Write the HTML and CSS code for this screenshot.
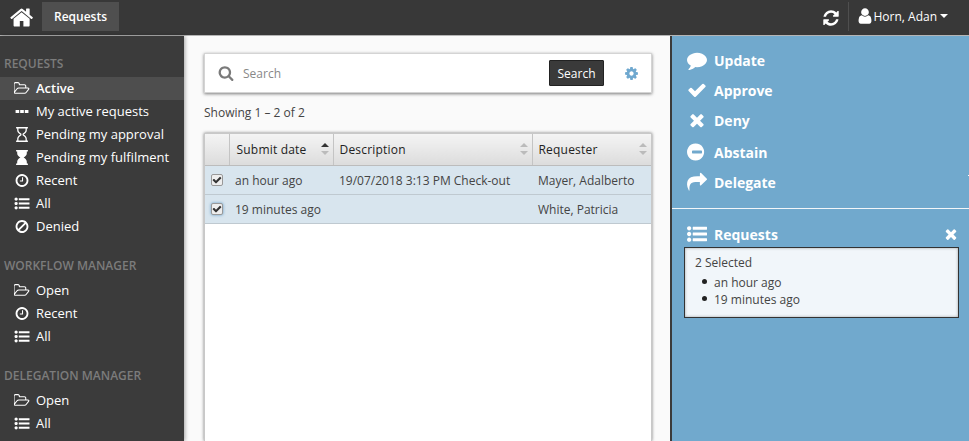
FILE: index.html
```html
<!DOCTYPE html>
<html lang="en">
<head>
<meta charset="utf-8">
<title>Requests</title>
<link rel="stylesheet" href="styles.css">
</head>
<body>
<svg class="defs" width="0" height="0" aria-hidden="true">
  <symbol id="i-home" viewBox="0 0 1792 1792"><path d="M1408 992v480q0 26-19 45t-45 19h-384v-384h-256v384h-384q-26 0-45-19t-19-45v-480q0-1 .5-3t.5-3l575-474 575 474q1 2 1 6zm223-69l-62 74q-8 9-21 11h-3q-13 0-21-7l-692-577-692 577q-12 8-24 7-13-2-21-11l-62-74q-8-10-7-23.5t11-20.5l719-599q32-26 76-26t76 26l244 204v-195q0-14 9-23t23-9h192q14 0 23 9t9 23v408l219 182q10 8 11 21.5t-7 23.5z"/></symbol>
  <symbol id="i-refresh" viewBox="0 0 1792 1792"><path d="M1639 1056q0 5-1 7-64 268-268 434.5t-478 166.5q-146 0-282.5-55t-243.5-157l-129 129q-19 19-45 19t-45-19-19-45v-448q0-26 19-45t45-19h448q26 0 45 19t19 45-19 45l-137 137q71 66 161 102t187 36q134 0 250-65t186-179q11-17 53-117 8-23 30-23h192q13 0 22.5 9.5t9.5 22.5zm25-800v448q0 26-19 45t-45 19h-448q-26 0-45-19t-19-45 19-45l138-138q-148-137-349-137-134 0-250 65t-186 179q-11 17-53 117-8 23-30 23h-199q-13 0-22.5-9.5t-9.5-22.5v-7q65-268 270-434.5t480-166.5q146 0 284 55.5t245 156.5l130-129q19-19 45-19t45 19 19 45z"/></symbol>
  <symbol id="i-user" viewBox="0 0 1792 1792"><path d="M1536 1399q0 109-62.5 187t-150.5 78h-854q-88 0-150.5-78t-62.5-187q0-85 8.5-160.5t31.5-152 58.5-131 94-89 134.5-34.5q131 128 313 128t313-128q76 0 134.5 34.5t94 89 58.5 131 31.5 152 8.5 160.5zm-256-887q0 159-112.5 271.5t-271.5 112.5-271.5-112.5-112.5-271.5 112.5-271.5 271.5-112.5 271.5 112.5 112.5 271.5z"/></symbol>
  <symbol id="i-folder" viewBox="0 0 1920 1792"><path d="M1717 931q0-35-53-35h-1088q-40 0-85.5 21.5t-71.5 52.5l-294 363q-18 24-18 40 0 35 53 35h1088q40 0 86-22t71-53l294-363q18-22 18-39zm-1141-163h768v-160q0-40-28-68t-68-28h-576q-40 0-68-28t-28-68v-64q0-40-28-68t-68-28h-320q-40 0-68 28t-28 68v853l256-315q44-53 116-87.5t140-34.5zm1269 163q0 62-46 120l-295 363q-43 53-116 87.5t-140 34.5h-1088q-92 0-158-66t-66-158v-960q0-92 66-158t158-66h320q92 0 158 66t66 158v32h544q92 0 158 66t66 158v160h192q54 0 99 24.5t67 70.5q15 32 15 68z"/></symbol>
  <symbol id="i-dots" viewBox="0 0 14 14"><path d="M1 5.500h3.400v3h-3.400zM5.300 5.500h3.400v3h-3.400zM9.600 5.500h3.400v3h-3.400z"/></symbol>
  <symbol id="i-glass" viewBox="0 0 14 14"><path d="M1.500 0h11v1.300h-1v1.700c0 1.900-1.500 3.200-3 4 1.500.8 3 2.100 3 4v1.700h1v1.300h-11v-1.300h1v-1.700c0-1.900 1.500-3.200 3-4-1.500-.8-3-2.100-3-4v-1.700h-1zM3.700 1.300v1.700c0 1.500 1.500 2.500 2.800 3.300v1.400c-1.300.8-2.800 1.800-2.800 3.300v1.700h6.600v-1.700c0-1.500-1.500-2.500-2.800-3.300v-1.400c1.300-.8 2.800-1.800 2.800-3.300v-1.700z"/></symbol>
  <symbol id="i-glass-half" viewBox="0 0 14 14"><path d="M1.500 0h11v1.300h-1v1.700c0 1.900-1.500 3.200-3 4 1.500.8 3 2.100 3 4v1.700h1v1.300h-11v-1.300h1v-1.700c0-1.900 1.500-3.200 3-4-1.500-.8-3-2.100-3-4v-1.700h-1z"/></symbol>
  <symbol id="i-clock" viewBox="0 0 1792 1792"><path d="M1024 544v448q0 14-9 23t-23 9h-320q-14 0-23-9t-9-23v-64q0-14 9-23t23-9h224v-352q0-14 9-23t23-9h64q14 0 23 9t9 23zm416 352q0-148-73-273t-198-198-273-73-273 73-198 198-73 273 73 273 198 198 273 73 273-73 198-198 73-273zm224 0q0 209-103 385.500t-279.500 279.500-385.500 103-385.500-103-279.500-279.500-103-385.500 103-385.500 279.500-279.500 385.500-103 385.500 103 279.500 279.500 103 385.500z"/></symbol>
  <symbol id="i-list" viewBox="0 0 1792 1792"><path d="M384 1408q0 80-56 136t-136 56-136-56-56-136 56-136 136-56 136 56 56 136zm0-512q0 80-56 136t-136 56-136-56-56-136 56-136 136-56 136 56 56 136zm1408 416v192q0 13-9.500 22.500t-22.500 9.500h-1216q-13 0-22.500-9.500t-9.500-22.500v-192q0-13 9.500-22.500t22.500-9.500h1216q13 0 22.500 9.500t9.500 22.500zm-1408-928q0 80-56 136t-136 56-136-56-56-136 56-136 136-56 136 56 56 136zm1408 416v192q0 13-9.500 22.500t-22.500 9.500h-1216q-13 0-22.500-9.500t-9.500-22.500v-192q0-13 9.500-22.500t22.500-9.500h1216q13 0 22.500 9.500t9.500 22.500zm0-512v192q0 13-9.500 22.500t-22.500 9.500h-1216q-13 0-22.500-9.500t-9.500-22.500v-192q0-13 9.500-22.500t22.500-9.500h1216q13 0 22.500 9.500t9.500 22.500z"/></symbol>
  <symbol id="i-ban" viewBox="0 0 1792 1792"><path d="M1440 893q0-161-87-295l-754 753q137 89 297 89 111 0 211.500-43.500t173.500-116.500 116-174.500 43-212.500zm-999 299l755-754q-135-91-300-91-148 0-273 73t-198 199-73 274q0 162 89 299zm1223-299q0 157-61 300t-163.500 246-245 164-298.500 61-298.500-61-245-164-163.500-246-61-300 61-299.500 163.500-245.500 245-164 298.500-61 298.500 61 245 164 163.500 245.500 61 299.500z"/></symbol>
  <symbol id="i-search" viewBox="0 0 1792 1792"><path d="M1216 832q0-185-131.500-316.500t-316.500-131.500-316.500 131.500-131.500 316.500 131.500 316.500 316.500 131.500 316.500-131.500 131.500-316.500zm512 832q0 52-38 90t-90 38q-54 0-90-38l-343-342q-179 124-399 124-143 0-273.500-55.500t-225-150-150-225-55.500-273.500 55.500-273.500 150-225 225-150 273.500-55.500 273.500 55.500 225 150 150 225 55.500 273.500q0 220-124 399l343 343q37 37 37 90z"/></symbol>
  <symbol id="i-cog" viewBox="0 0 1792 1792"><path d="M1152 896q0-106-75-181t-181-75-181 75-75 181 75 181 181 75 181-75 75-181zm512-109v222q0 12-8 23t-20 13l-185 28q-19 54-39 91 35 50 107 138 10 12 10 25t-9 23q-27 37-99 108t-94 71q-12 0-26-9l-138-108q-44 23-91 38-16 136-29 186-7 28-36 28h-222q-14 0-24.500-8.500t-11.500-21.500l-28-184q-49-16-90-37l-141 107q-10 9-25 9-14 0-25-11-126-114-165-168-7-10-7-23 0-12 8-23 15-21 51-66.500t54-70.500q-27-50-41-99l-183-27q-13-2-21-12.500t-8-23.500v-222q0-12 8-23t19-13l186-28q14-46 39-92-40-57-107-138-10-12-10-24 0-10 9-23 26-36 98.500-107.500t94.500-71.500q13 0 26 10l138 107q44-23 91-38 16-136 29-186 7-28 36-28h222q14 0 24.500 8.500t11.500 21.500l28 184q49 16 90 37l142-107q9-9 24-9 13 0 25 10 129 119 165 170 7 8 7 22 0 12-8 23-15 21-51 66.500t-54 70.500q26 50 41 98l183 28q13 2 21 12.500t8 23.500z"/></symbol>
  <symbol id="i-comment" viewBox="0 0 1792 1792"><path d="M1792 896q0 174-120 321.500t-326 233-450 85.500q-70 0-145-8-198 175-460 242-49 14-114 22-17 2-30.500-9t-17.500-29v-1q-3-4-.5-12t2-10 4.500-9.500l6-9 7-8.500 8-9q7-8 31-34.500t34.500-38 31-39.500 32.500-51 27-59 26-76q-157-89-247.500-220t-90.500-281q0-130 71-248.500t191-204.500 286-136.500 348-50.500q244 0 450 85.500t326 233 120 321.500z"/></symbol>
  <symbol id="i-check" viewBox="0 0 1792 1792"><path d="M1671 566q0 40-28 68l-724 724-136 136q-28 28-68 28t-68-28l-136-136-362-362q-28-28-28-68t28-68l136-136q28-28 68-28t68 28l294 295 656-657q28-28 68-28t68 28l136 136q28 28 28 68z"/></symbol>
  <symbol id="i-times" viewBox="0 0 1792 1792"><path d="M1490 1322q0 40-28 68l-136 136q-28 28-68 28t-68-28l-294-294-294 294q-28 28-68 28t-68-28l-136-136q-28-28-28-68t28-68l294-294-294-294q-28-28-28-68t28-68l136-136q28-28 68-28t68 28l294 294 294-294q28-28 68-28t68 28l136 136q28 28 28 68t-28 68l-294 294 294 294q28 28 28 68z"/></symbol>
  <symbol id="i-minus" viewBox="0 0 1792 1792"><path d="M1344 960v-128q0-26-19-45t-45-19h-768q-26 0-45 19t-19 45v128q0 26 19 45t45 19h768q26 0 45-19t19-45zm192-64q0 209-103 385.500t-279.500 279.500-385.500 103-385.500-103-279.500-279.500-103-385.500 103-385.500 279.500-279.500 385.500-103 385.500 103 279.500 279.500 103 385.500z"/></symbol>
  <symbol id="i-share" viewBox="0 0 1792 1792"><path d="M1792 640q0 26-19 45l-512 512q-19 19-45 19t-45-19-19-45v-256h-224q-98 0-175.500 6t-154 21.500-133 42.500-105.500 69.500-77.500 103-47.500 136.500-16.500 178q0 57 5 127 0 6 2.500 23.500t2.500 26.500q0 15-8.500 25t-23.500 10q-16 0-28-17-7-9-13-22t-13.500-30-10.500-24q-127-285-127-451 0-199 53-333 162-403 875-403h224v-256q0-26 19-45t45-19 45 19l512 512q19 19 19 45z"/></symbol>
</svg>

<header class="topbar">
  <svg class="home-icon"><use href="#i-home"/></svg>
  <a class="top-tab">Requests</a>
  <div class="top-right">
    <svg class="refresh-icon"><use href="#i-refresh"/></svg>
    <div class="top-user">
      <svg class="user-icon"><use href="#i-user"/></svg>
      <span>Horn, Adan</span>
      <span class="caret"></span>
    </div>
  </div>
</header>

<div class="shell">
  <nav class="sidebar">
    <h2 class="nav-title nav-title-first">REQUESTS</h2>
    <ul class="nav-list">
      <li class="nav-item nav-active"><svg class="nav-icon"><use href="#i-folder"/></svg>Active</li>
      <li class="nav-item"><svg class="nav-icon"><use href="#i-dots"/></svg>My active requests</li>
      <li class="nav-item"><svg class="nav-icon"><use href="#i-glass"/></svg>Pending my approval</li>
      <li class="nav-item"><svg class="nav-icon"><use href="#i-glass-half"/></svg>Pending my fulfilment</li>
      <li class="nav-item"><svg class="nav-icon"><use href="#i-clock"/></svg>Recent</li>
      <li class="nav-item"><svg class="nav-icon"><use href="#i-list"/></svg>All</li>
      <li class="nav-item"><svg class="nav-icon"><use href="#i-ban"/></svg>Denied</li>
    </ul>
    <h2 class="nav-title">WORKFLOW MANAGER</h2>
    <ul class="nav-list">
      <li class="nav-item"><svg class="nav-icon"><use href="#i-folder"/></svg>Open</li>
      <li class="nav-item"><svg class="nav-icon"><use href="#i-clock"/></svg>Recent</li>
      <li class="nav-item"><svg class="nav-icon"><use href="#i-list"/></svg>All</li>
    </ul>
    <h2 class="nav-title">DELEGATION MANAGER</h2>
    <ul class="nav-list">
      <li class="nav-item"><svg class="nav-icon"><use href="#i-folder"/></svg>Open</li>
      <li class="nav-item"><svg class="nav-icon"><use href="#i-list"/></svg>All</li>
    </ul>
  </nav>

  <main class="content">
    <div class="search-card">
      <svg class="search-icon"><use href="#i-search"/></svg>
      <span class="search-placeholder">Search</span>
      <button class="search-btn">Search</button>
      <svg class="cog-icon"><use href="#i-cog"/></svg>
    </div>
    <p class="showing">Showing 1 – 2 of 2</p>
    <div class="table-card">
      <table class="grid">
        <thead>
          <tr>
            <th class="col-check"></th>
            <th class="col-date"><span class="th-in">Submit date<span class="sort sort-asc"></span></span></th>
            <th class="col-desc"><span class="th-in">Description<span class="sort"></span></span></th>
            <th class="col-req"><span class="th-in">Requester<span class="sort"></span></span></th>
          </tr>
        </thead>
        <tbody>
          <tr>
            <td class="cell-check"><span class="checkbox"><svg class="check-mark"><use href="#i-check"/></svg></span></td>
            <td>an hour ago</td>
            <td>19/07/2018 3:13 PM Check-out</td>
            <td>Mayer, Adalberto</td>
          </tr>
          <tr>
            <td class="cell-check"><span class="checkbox checkbox-focus"><svg class="check-mark"><use href="#i-check"/></svg></span></td>
            <td>19 minutes ago</td>
            <td></td>
            <td>White, Patricia</td>
          </tr>
        </tbody>
      </table>
    </div>
  </main>

  <aside class="actions">
    <ul class="action-list">
      <li class="action"><svg class="action-icon"><use href="#i-comment"/></svg>Update</li>
      <li class="action"><svg class="action-icon"><use href="#i-check"/></svg>Approve</li>
      <li class="action"><svg class="action-icon"><use href="#i-times"/></svg>Deny</li>
      <li class="action action-gap"><svg class="action-icon"><use href="#i-minus"/></svg>Abstain</li>
      <li class="action"><svg class="action-icon"><use href="#i-share"/></svg>Delegate</li>
    </ul>
    <hr class="divider">
    <div class="sel-head">
      <svg class="action-icon"><use href="#i-list"/></svg>
      <span>Requests</span>
      <svg class="close-icon"><use href="#i-times"/></svg>
    </div>
    <div class="sel-box">
      <div>2 Selected</div>
      <ul class="sel-list">
        <li class="sel-item">an hour ago</li>
        <li class="sel-item">19 minutes ago</li>
      </ul>
    </div>
  </aside>
</div>
</body>
</html>
```

FILE: styles.css
```css
* { box-sizing: border-box; }
html, body { margin: 0; height: 100%; overflow: hidden; }
body {
  display: flex;
  flex-direction: column;
  font-family: "Open Sans", sans-serif;
  font-size: 12px;
  color: #333;
  background: #fafafa;
}
.defs { position: absolute; }
svg { fill: currentColor; display: block; flex: none; }

/* top bar */
.topbar {
  flex: none;
  height: 36px;
  display: flex;
  align-items: center;
  background: #383838;
  border-bottom: 1px solid #b5b5b5;
  color: #fff;
}
.home-icon { width: 25px; height: 25px; margin-left: 10px; }
.top-tab {
  margin-left: 7px;
  height: 29px;
  width: 77px;
  margin-top: -3px;
  display: flex;
  align-items: center;
  justify-content: center;
  background: #4f4f4f;
  font-weight: 600;
}
.top-right { margin-left: auto; display: flex; align-items: center; height: 100%; }
.refresh-icon { width: 18px; height: 18px; margin-right: 8px; }
.top-user {
  height: 29px;
  margin-top: -3px;
  padding-left: 7px;
  padding-right: 21px;
  border-left: 1px solid #4f4f4f;
  display: flex;
  align-items: center;
}
.user-icon { width: 18px; height: 18px; margin-right: -1px; }
.caret {
  margin-left: 3px;
  border: 4px solid transparent;
  border-top-color: #fff;
  border-bottom: 0;
}

.shell { flex: 1; display: flex; min-height: 0; }

/* sidebar */
.sidebar {
  flex: none;
  width: 184px;
  background: #3b3b3b;
  color: #fff;
  box-shadow: 1px 0 4px rgba(0,0,0,.35);
  z-index: 1;
}
.nav-title {
  margin: 18px 0 3px;
  padding-left: 4px;
  font-size: 12px;
  line-height: 20px;
  font-weight: 600;
  color: #7c7c7c;
}
.nav-list { list-style: none; margin: 0; padding: 0; }
.nav-item {
  height: 23px;
  display: flex;
  align-items: center;
  padding: 0 0 1px 14px;
  font-size: 13px;
}
.nav-active { background: #4e4e4e; font-weight: 600; }
.nav-icon { width: 16px; height: 15px; margin-right: 6px; }

/* main */
.content {
  flex: none;
  width: 486px;
  padding: 17px 18px 0 20px;
  display: flex;
  flex-direction: column;
  min-height: 0;
}
.search-card {
  flex: none;
  height: 40px;
  display: flex;
  align-items: center;
  padding-left: 13px;
  padding-right: 12px;
  background: #fff;
  border: 1px solid #d4d4d4;
  box-shadow: 0 1px 3px rgba(0,0,0,.5);
}
.search-icon { width: 16px; height: 16px; color: #7a7a7a; }
.search-placeholder { margin-left: 9px; color: #888; }
.search-btn {
  margin-left: auto;
  width: 55px;
  height: 26px;
  padding: 0;
  border: 1px solid #222;
  border-radius: 1px;
  background: #3a3a3a;
  color: #fff;
  font: inherit;
}
.cog-icon { width: 15px; height: 15px; margin-left: 20px; color: #6fa8cf; }
.showing { flex: none; margin: 0; height: 40px; line-height: 40px; color: #444; }

.table-card {
  flex: 1;
  min-height: 0;
  background: #fff;
  border: 1px solid #c8c8c8;
  border-bottom: 0;
  box-shadow: 0 0 3px rgba(0,0,0,.5);
}
.grid { width: 100%; border-collapse: collapse; table-layout: fixed; }
.grid th {
  height: 31px;
  padding: 0 6px;
  text-align: left;
  font-weight: 500;
  letter-spacing: .2px;
  color: #222;
  background: linear-gradient(#f4f4f4, #dcdcdc);
  border-right: 1px solid #c4c4c4;
  border-bottom: 1px solid #bcbcbc;
}
.grid th:last-child { border-right: 0; }
.grid .col-date { padding-left: 7px; }
.col-check { width: 24px; }
.col-date { width: 104px; }
.col-desc { width: 199px; }
.th-in { display: flex; align-items: center; justify-content: space-between; }
.sort { position: relative; width: 8px; height: 12px; margin-right: -2px; }
.sort::before, .sort::after {
  content: "";
  position: absolute;
  left: 0;
  border: 4px solid transparent;
}
.sort::before { top: 0; border-bottom-color: #bbb; border-top: 0; }
.sort::after { bottom: 0; border-top-color: #bbb; border-bottom: 0; }
.sort-asc::before { border-bottom-color: #333; }
.grid td {
  height: 29px;
  padding: 1px 6px 0;
  white-space: nowrap;
  background: #d8e5ee;
  border-bottom: 1px solid #bfc9d0;
  color: #444;
}
.grid .cell-check { padding: 1px 0 0 6px; }
.checkbox {
  width: 12px;
  height: 12px;
  display: flex;
  align-items: center;
  justify-content: center;
  background: #eee;
  border: 1px solid #999;
  border-radius: 2px;
}
.checkbox-focus { box-shadow: 0 0 3px #5d97c4; }
.check-mark { width: 10px; height: 10px; color: #333; }

/* right panel */
.actions {
  position: relative;
  flex: 1;
  min-width: 0;
  background: #71a9cd;
  border-left: 2px solid #3b3b3b;
  color: #fff;
  font-weight: 700;
  font-size: 14px;
}
.actions::after {
  content: "";
  position: absolute;
  right: 0;
  top: 139px;
  width: 1px;
  height: 1px;
  background: #fff;
}
.action-list { list-style: none; margin: 0; padding: 9px 0 0 15px; }
.action { height: 30px; display: flex; align-items: center; }
.action-gap { height: 32px; padding-top: 2px; }
.action-icon { width: 20px; height: 20px; margin-right: 7px; }
.divider { margin: 11px 0 0; border: 0; border-top: 1px solid #f2f6f9; }
.sel-head {
  display: flex;
  align-items: center;
  height: 24px;
  margin-top: 13px;
  padding: 0 10px 0 15px;
}
.close-icon { width: 16px; height: 16px; margin-left: auto; }
.sel-box {
  margin: 1px 10px 0 12px;
  height: 71px;
  padding: 6px 10px;
  background: #f1f6fa;
  border: 1px solid #333;
  box-shadow: inset 0 0 3px rgba(0,0,0,.35);
  color: #444;
  font-weight: 400;
  font-size: 12px;
  line-height: 17px;
}
.sel-list { list-style: none; margin: 3px 0 0; padding-left: 7px; }
.sel-item { display: flex; align-items: flex-start; }
.sel-item::before {
  content: "";
  flex: none;
  width: 5px;
  height: 5px;
  margin: 5px 7px 0 0;
  border-radius: 50%;
  background: #222;
}
```
